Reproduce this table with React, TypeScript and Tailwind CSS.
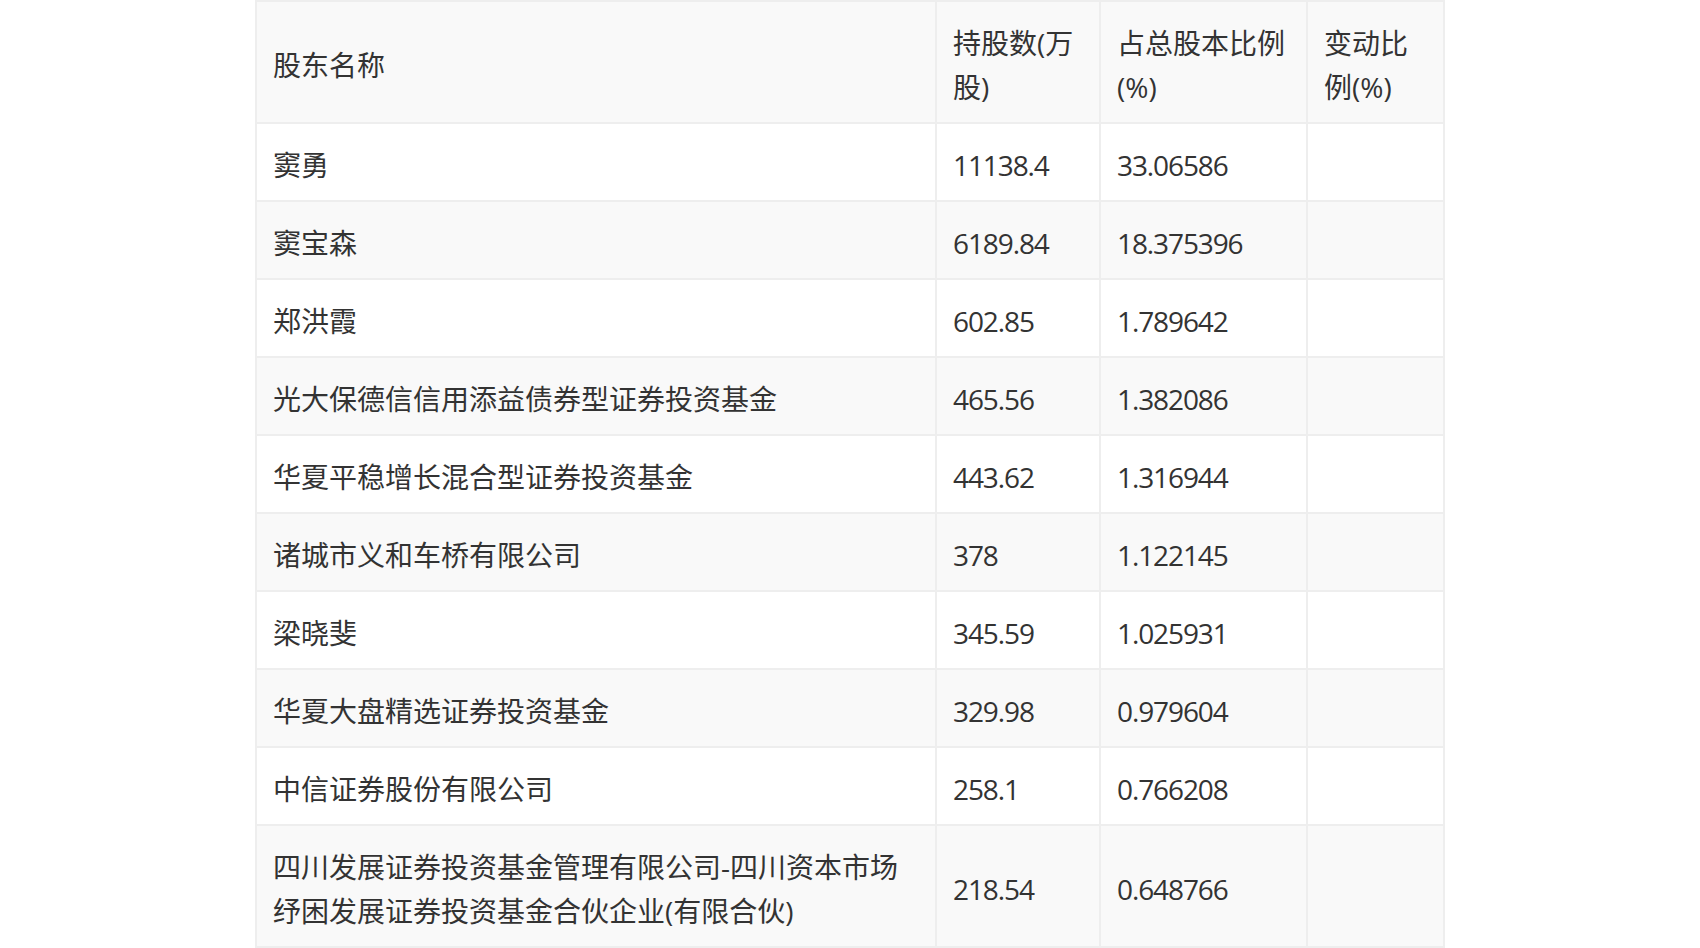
import React from "react";

const header = ["股东名称", "持股数(万股)", "占总股本比例(%)", "变动比例(%)"];

const rows: [string, string, string, string][] = [
  ["窦勇", "11138.4", "33.06586", ""],
  ["窦宝森", "6189.84", "18.375396", ""],
  ["郑洪霞", "602.85", "1.789642", ""],
  ["光大保德信信用添益债券型证券投资基金", "465.56", "1.382086", ""],
  ["华夏平稳增长混合型证券投资基金", "443.62", "1.316944", ""],
  ["诸城市义和车桥有限公司", "378", "1.122145", ""],
  ["梁晓斐", "345.59", "1.025931", ""],
  ["华夏大盘精选证券投资基金", "329.98", "0.979604", ""],
  ["中信证券股份有限公司", "258.1", "0.766208", ""],
  ["四川发展证券投资基金管理有限公司-四川资本市场纾困发展证券投资基金合伙企业(有限合伙)", "218.54", "0.648766", ""],
];

function Cell({ children, gray, num }: { children: React.ReactNode; gray: boolean; num?: boolean }) {
  return (
    <div
      className={
        "flex items-center px-4 pt-[19px] pb-[13px] text-[28px] leading-[44px] text-[#333333] break-words " +
        (gray ? "bg-[#f9f9f9] " : "bg-white ") +
        (num ? "tracking-[-1.1px]" : "")
      }
    >
      <span className="min-w-0">{children}</span>
    </div>
  );
}

export default function App() {
  return (
    <div
      className="min-h-[948px] w-full bg-white"
      style={{ fontFamily: '"Open Sans", "Noto Sans CJK SC", sans-serif' }}
    >
      <div className="mx-auto grid w-[1190px] grid-cols-[678px_162px_205px_135px] gap-[2px] bg-[#eeeeee] p-[2px]">
        {header.map((h, i) => (
          <Cell key={"h" + i} gray={true}>
            {h}
          </Cell>
        ))}
        {rows.map((r, ri) =>
          r.map((c, ci) => (
            <Cell key={ri + "-" + ci} gray={ri % 2 === 1} num={ci > 0}>
              {c}
            </Cell>
          ))
        )}
      </div>
    </div>
  );
}
